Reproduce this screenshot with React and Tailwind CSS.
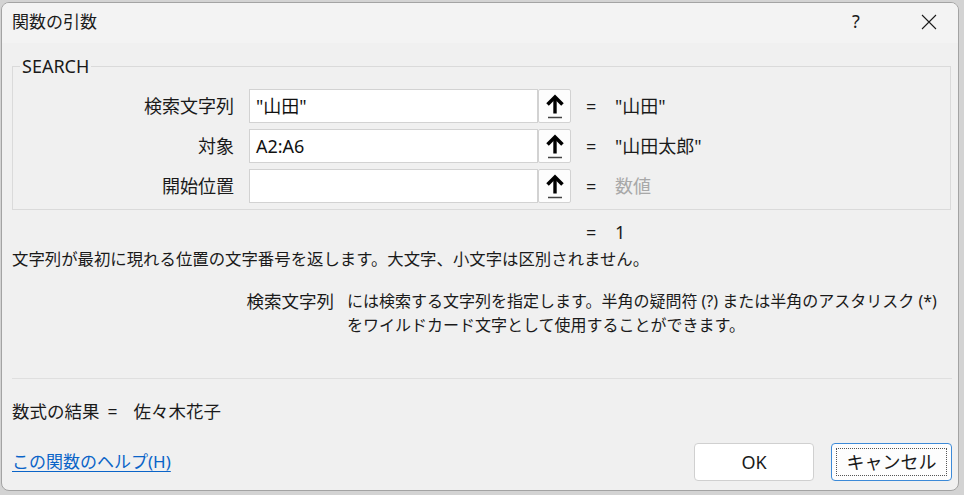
import React from "react";

const font = "font-['Noto_Sans','Noto_Sans_CJK_JP',sans-serif]";

const UpArrow = () => (
  <svg width="18" height="28" viewBox="0 0 18 28">
    <path d="M9 21.5V5" stroke="#000" strokeWidth="3.4" fill="none" />
    <path d="M2.8 11.2L9 5l6.2 6.2" stroke="#000" strokeWidth="3.6" fill="none" strokeLinecap="square" />
    <path d="M2 25.5h14" stroke="#444" strokeWidth="1.3" />
  </svg>
);

const ArgRow = ({ label, value, result, muted }) => (
  <div className="flex items-center h-[34px]">
    <div className="w-[221px] text-right text-[18px] leading-[24px] text-[#1a1a1a]">{label}</div>
    <div className="ml-[15px] w-[289px] h-[34px] bg-white border border-[#d2d2d2] flex items-center pl-[6px] text-[18px] text-[#111]">
      {value}
    </div>
    <div className="w-[33px] h-[34px] bg-[#fdfdfd] border border-[#d2d2d2] rounded-[2px] flex items-center justify-center">
      <UpArrow />
    </div>
    <div className="ml-[15px] w-[29px] text-[18px] text-[#1a1a1a]">=</div>
    <div className={`text-[18px] ${muted ? "text-[#a8a8a8]" : "text-[#1a1a1a]"}`}>{result}</div>
  </div>
);

const App = () => {
  return (
    <div className={`w-[964px] h-[495px] bg-[#d3d3d3] pt-[2px] pl-[1px] ${font}`}>
      <div className="w-[958px] h-[489px] rounded-[8px] border border-[#a3a3a3] bg-[#f0f0f0] overflow-hidden flex flex-col">
        {/* title bar */}
        <div className="h-[40px] bg-[#f3f3f3] flex items-center pl-[10px] pb-[3px] text-[#1b1b1b]">
          <span className="text-[17px]">関数の引数</span>
          <span className="ml-auto w-[46px] text-center text-[18px]">?</span>
          <span className="w-[27px]" />
          <span className="w-[46px] mr-[6px] flex justify-center">
            <svg width="16" height="16" viewBox="0 0 16 16">
              <path d="M1 1L15 15M15 1L1 15" stroke="#1b1b1b" strokeWidth="1.1" />
            </svg>
          </span>
        </div>

        {/* argument group */}
        <fieldset className="mt-[11px] ml-[10px] w-[939px] border border-[#dadada] pt-[11px] pb-[6px] flex flex-col gap-[6px]">
          <legend className="ml-[7px] px-[2px] text-[18px] leading-[24px] text-[#1a1a1a]">SEARCH</legend>
          <ArgRow label="検索文字列" value={'"山田"'} result={'"山田"'} />
          <ArgRow label="対象" value="A2:A6" result={'"山田太郎"'} />
          <ArgRow label="開始位置" value="" result="数値" muted />
        </fieldset>

        <div className="mt-[10px] h-[24px] pl-[584px] flex items-center text-[18px] text-[#1a1a1a]">
          <span className="w-[29px]">=</span>
          <span>1</span>
        </div>

        <div className="mt-[3px] h-[24px] pl-[10px] text-[16.4px] leading-[24px] text-[#1a1a1a]">
          文字列が最初に現れる位置の文字番号を返します。大文字、小文字は区別されません。
        </div>

        <div className="mt-[18px] flex text-[16px] leading-[24px] text-[#1a1a1a]">
          <div className="w-[332px] text-right text-[17.5px]">検索文字列</div>
          <div className="ml-[13px]">
            <div>には検索する文字列を指定します。半角の疑問符 (?) または半角のアスタリスク (*)</div>
            <div>をワイルドカード文字として使用することができます。</div>
          </div>
        </div>

        <div className="mt-[41px] ml-[10px] w-[940px] h-[1px] bg-[#dfdfdf]" />

        <div className="mt-[20px] h-[24px] pl-[10px] flex items-center text-[17.5px] text-[#1a1a1a]">
          <span>数式の結果</span>
          <span className="ml-[8px]">=</span>
          <span className="ml-[16px]">佐々木花子</span>
        </div>

        <div className="mt-[20px] h-[38px] pl-[10px] pr-[6px] flex items-center">
          <a href="#" className="text-[17px] text-[#0a64c8] underline underline-offset-[3px]">
            この関数のヘルプ(H)
          </a>
          <button className="ml-auto w-[120px] h-[38px] bg-white border border-[#d0d0d0] rounded-[4px] text-[18px] text-[#1a1a1a]">
            OK
          </button>
          <button className="ml-[17px] w-[121px] h-[38px] bg-[#fdfdfd] border border-[#3c8ad8] rounded-[4px] p-[4px]">
            <div className="w-full h-full border border-dotted border-[#555] flex items-center justify-center text-[18px] text-[#1a1a1a]">
              キャンセル
            </div>
          </button>
        </div>
      </div>
    </div>
  );
};

export default App;
